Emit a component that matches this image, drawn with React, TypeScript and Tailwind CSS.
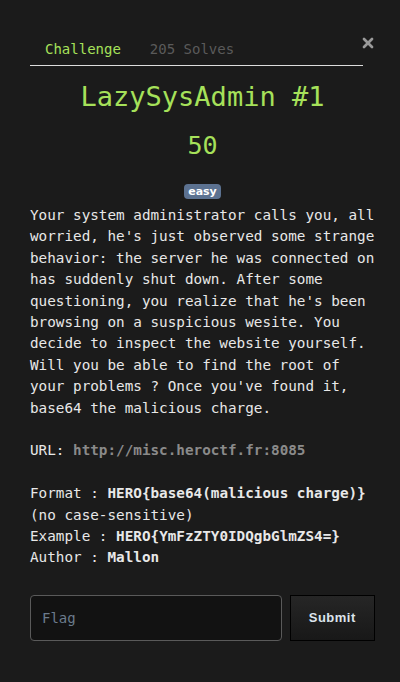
import { X } from 'lucide-react';

const mono = { fontFamily: '"DejaVu Sans Mono", monospace' };

export default function App() {
  return (
    <div className="min-h-[682px] w-[400px] bg-[#1b1b1b] text-[#e8e8e8]" style={mono}>
      <div className="relative pl-[30px] pr-[25px] pt-[39px]">
        <button className="absolute right-[24px] top-[35px] text-[#9a9a9a]">
          <X size={16} strokeWidth={4} />
        </button>
        <div className="mr-[12px] flex border-b border-[#dcdcdc] pb-[6px] text-[14px] leading-[20px]">
          <span className="ml-[15px] text-[#a6e15a]">Challenge</span>
          <span className="ml-[29px] text-[#5a5a5a]">205 Solves</span>
        </div>

        <h1 className="mt-[13px] text-center text-[27px] leading-[36px] text-[#a6e15a]">LazySysAdmin #1</h1>
        <div className="mt-[18px] text-center text-[25px] leading-[26px] text-[#a6e15a]">50</div>

        <div className="mt-[25px] flex justify-center">
          <span
            className="rounded-[4px] bg-[#5c7291] px-[4px] text-[11px] font-bold leading-[15px] text-white"
            style={{ fontFamily: '"DejaVu Sans", sans-serif' }}
          >
            easy
          </span>
        </div>

        <div className="mt-[6px] text-[14.3px] leading-[21.4px]">
          <p>
            Your system administrator calls you, all worried, he's just observed some strange behavior: the server he
            was connected on has suddenly shut down. After some questioning, you realize that he's been browsing on a
            suspicious wesite. You decide to inspect the website yourself. Will you be able to find the root of your
            problems ? Once you've found it, base64 the malicious charge.
          </p>
          <p className="mt-[21.4px]">
            URL: <span className="font-bold text-[#8a8a8a]">http://misc.heroctf.fr:8085</span>
          </p>
          <p className="mt-[21.4px]">
            Format : <b>HERO{'{'}base64(malicious charge){'}'}</b>
            <br />
            (no case-sensitive)
            <br />
            Example : <b>HERO{'{'}YmFzZTY0IDQgbGlmZS4={'}'}</b>
            <br />
            Author : <b>Mallon</b>
          </p>
        </div>

        <div className="mt-[26px] flex gap-[8px]">
          <input
            placeholder="Flag"
            className="h-[46px] w-[253px] rounded-[4px] border border-[#5a5a5a] bg-[#121212] px-[11px] text-[14px] text-white outline-none placeholder:text-[#6b7b8c]"
            style={mono}
          />
          <button
            className="h-[46px] w-[86px] border border-black bg-gradient-to-b from-[#262626] to-[#181818] text-[13px] font-bold tracking-[0.5px] text-[#dce4ec]"
            style={{ fontFamily: '"Liberation Sans", Arial, sans-serif' }}
          >
            Submit
          </button>
        </div>
      </div>
    </div>
  );
}
